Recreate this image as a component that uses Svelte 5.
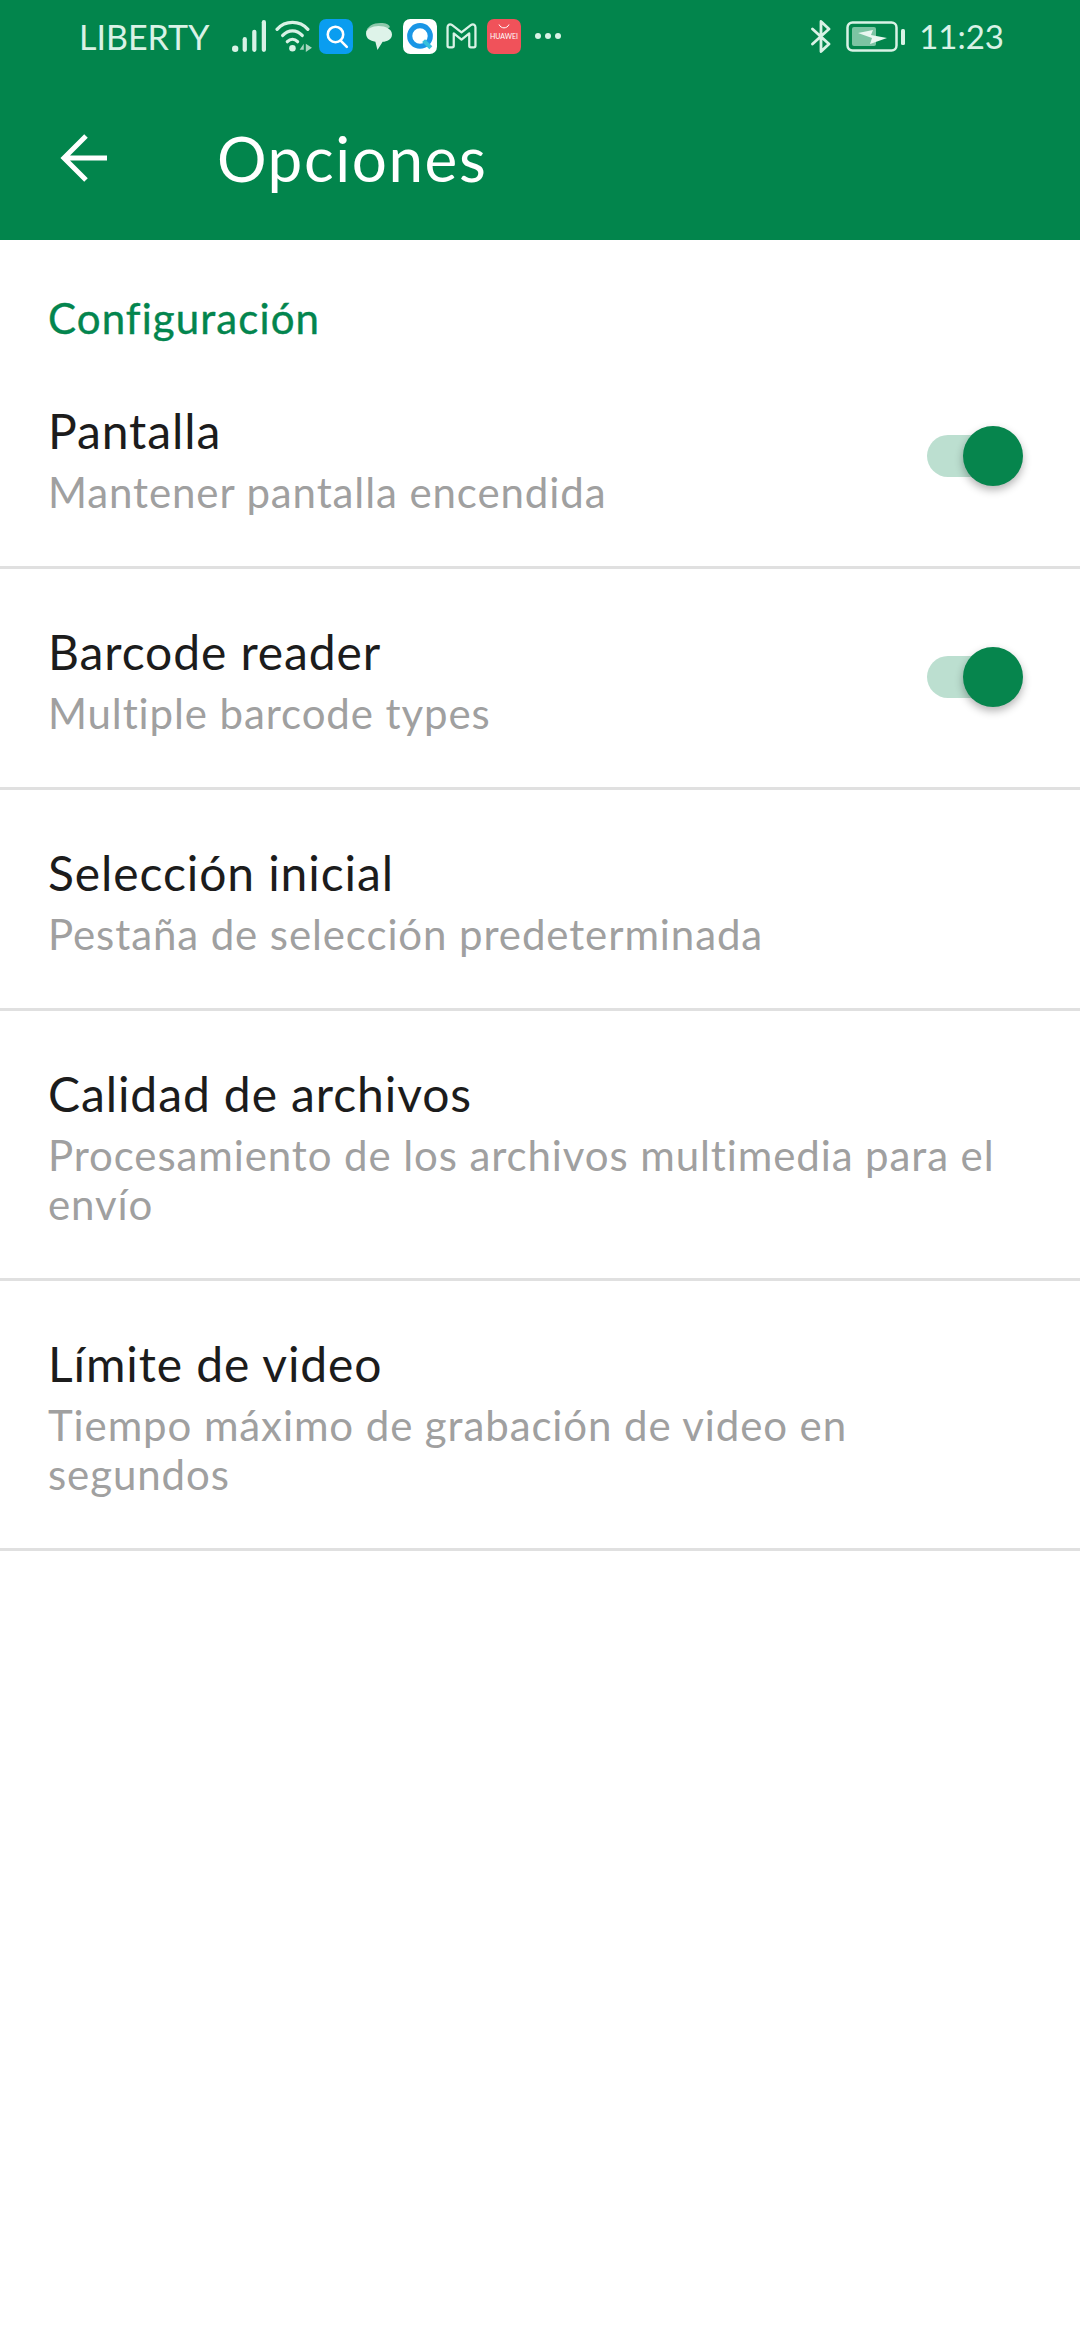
<script>
	const rows = [
		{ title: 'Pantalla', sub: 'Mantener pantalla encendida', on: true },
		{ title: 'Barcode reader', sub: 'Multiple barcode types', on: true },
		{ title: 'Selección inicial', sub: 'Pestaña de selección predeterminada' },
		{ title: 'Calidad de archivos', sub: 'Procesamiento de los archivos multimedia para el envío' },
		{ title: 'Límite de video', sub: 'Tiempo máximo de grabación de video en segundos' }
	];
</script>

<div class="page">
	<header>
		<div class="status">
			<span class="carrier">LIBERTY</span>
			<svg class="signal" viewBox="0 0 32 30" width="34" height="32">
				<g fill="#d9f2e6">
					<circle cx="3" cy="27" r="3" />
					<rect x="10" y="16" width="4" height="14" rx="2" />
					<rect x="19" y="9" width="4" height="21" rx="2" />
					<rect x="28" y="0" width="4" height="30" rx="2" />
				</g>
			</svg>
			<svg class="wifi" viewBox="0 0 37 32" width="38" height="33">
				<g fill="none" stroke="#d9f2e6" stroke-width="3.2" stroke-linecap="round">
					<path d="M2 9 C10 0 24 0 32 9" />
					<path d="M7.5 15 C13 9 21 9 26.5 15" />
					<path d="M12 21 C15 18 19 18 22 21" />
				</g>
				<circle cx="17" cy="27.5" r="3.2" fill="#d9f2e6" />
				<path d="M24 29 L28 23 V29 Z M30 23 L36 27 L30 31 Z" fill="#a9d6c0" />
			</svg>
			<svg class="app" viewBox="0 0 33 34" width="34" height="35">
				<rect width="33" height="34" rx="7" fill="#0a9df0" />
				<circle cx="16" cy="15" r="7.5" fill="none" stroke="#fff" stroke-width="2.5" />
				<path d="M21 21 L27 27" stroke="#fff" stroke-width="2.5" stroke-linecap="round" />
			</svg>
			<svg class="chat" viewBox="0 0 26 26" width="27" height="27">
				<path d="M1 9 C2 3 8 0 15 0 C20 0 23 1 24 4 L8 12 Z" fill="#8fc9ac" />
				<path d="M13 3 C20 3 26 6 26 11 C26 16 21 18 17 18 L12 26 L10 18 C5 17 1 15 1 10 C1 6 7 3 13 3 Z" fill="#def3e9" />
			</svg>
			<svg class="app" viewBox="0 0 33 34" width="34" height="35">
				<rect width="33" height="34" rx="7" fill="#fff" />
				<circle cx="16.5" cy="16.5" r="10" fill="none" stroke="#1a96e6" stroke-width="5" />
				<path d="M20 21 L27 28" stroke="#38c0dc" stroke-width="4" />
			</svg>
			<svg class="gm" viewBox="0 0 30 25" width="31" height="26">
				<path d="M1.5 4 C1.5 1.500 4 0.500 6 2 L15 9 L24 2 C26 0.500 28.500 1.500 28.500 4 V22 C28.500 23 28 23.500 27 23.500 H24 C23 23.500 22.500 23 22.500 22 V10 L15 16 L7.500 10 V22 C7.500 23 7 23.500 6 23.500 H3 C2 23.500 1.500 23 1.500 22 Z" fill="none" stroke="#d9f2e6" stroke-width="2.2" stroke-linejoin="round" />
			</svg>
			<div class="huawei">
				<svg viewBox="0 0 12 5" width="12" height="5"><path d="M1 0.5 C3 5 9 5 11 0.5" fill="none" stroke="#fff" stroke-width="1" /></svg>
				<span>HUAWEI</span>
			</div>
			<span class="more"><i></i><i></i><i></i></span>
			<span class="spacer"></span>
			<svg class="bt" viewBox="0 0 20 33" width="20" height="33">
				<path d="M1.500 9 L18 24 L10 31.500 V1.500 L18 9 L1.500 24" fill="none" stroke="#d9f2e6" stroke-width="2.8" stroke-linejoin="round" stroke-linecap="round" />
			</svg>
			<svg class="battery" viewBox="0 0 59 31" width="59" height="31">
				<rect x="1.500" y="1.500" width="49" height="28" rx="5" fill="none" stroke="#d9f2e6" stroke-width="2.500" />
				<rect x="6" y="6" width="24" height="19" rx="2" fill="#7cc4a3" />
				<path d="M12 12 L27 9 L25 14 L41 17 L24 23 L26 17 Z" fill="#e9f7f0" />
				<rect x="55" y="8" width="4" height="16" rx="1.500" fill="#d9f2e6" />
			</svg>
			<span class="time">11:23</span>
		</div>
		<div class="toolbar">
			<svg class="back" viewBox="0 0 48 48" width="48" height="48">
				<path d="M47 24 H4 M26 2 L4 24 L26 46" fill="none" stroke="#fff" stroke-width="5" />
			</svg>
			<h1>Opciones</h1>
		</div>
	</header>

	<main>
		<h2>Configuración</h2>
		{#each rows as row}
			<div class="row">
				<div class="text">
					<div class="title">{row.title}</div>
					<div class="sub">{row.sub}</div>
				</div>
				{#if row.on}
					<div class="switch"><span class="thumb"></span></div>
				{/if}
			</div>
		{/each}
	</main>
</div>

<style>
	:global(body) {
		margin: 0;
		background: #fff;
	}
	.page {
		width: 1080px;
		height: 2340px;
		font-family: Lato, 'Noto Sans', sans-serif;
		background: #fff;
	}
	header {
		background: #02854c;
		height: 240px;
	}
	.status {
		height: 72px;
		display: flex;
		align-items: center;
		padding: 0 76px 0 79px;
		color: #d9f2e6;
	}
	.carrier {
		font-size: 34px;
		width: 153px;
	}
	.signal {
		margin-right: 9px;
	}
	.wifi {
		margin-right: 6px;
	}
	.chat {
		margin: 0 11px 0 12px;
	}
	.gm {
		margin: 0 10px 0 9px;
	}
	.huawei {
		width: 34px;
		height: 35px;
		border-radius: 7px;
		background: #f0525a;
		display: flex;
		flex-direction: column;
		align-items: center;
		color: #fff;
		font-size: 7px;
		line-height: 8px;
		padding-top: 5px;
		box-sizing: border-box;
		overflow: hidden;
	}
	.huawei svg {
		margin-bottom: 3px;
	}
	.more {
		display: flex;
		gap: 4px;
		margin-left: 14px;
	}
	.more i {
		width: 6px;
		height: 6px;
		border-radius: 50%;
		background: #d9f2e6;
	}
	.spacer {
		flex: 1;
	}
	.battery {
		margin: 0 14px 0 15px;
	}
	.time {
		font-size: 33px;
	}
	.toolbar {
		height: 168px;
		display: flex;
		align-items: center;
		box-sizing: border-box;
		padding: 3px 0 0 60px;
	}
	.back {
		margin-right: 109px;
	}
	h1 {
		margin: 0;
		color: #fff;
		font-size: 62px;
		font-weight: 400;
		letter-spacing: 1.6px;
	}
	h2 {
		margin: 0;
		box-sizing: border-box;
		padding: 53px 48px 0;
		height: 108px;
		line-height: 50px;
		color: #03854e;
		font-size: 42px;
		font-weight: 400;
		letter-spacing: 1.1px;
		-webkit-text-stroke: 0.4px #03854e;
	}
	.row {
		display: flex;
		align-items: center;
		padding: 53px 57px 49px 48px;
		border-bottom: 3px solid #e0e0e0;
	}
	.text {
		flex: 1;
	}
	.title {
		font-size: 48px;
		line-height: 60px;
		letter-spacing: 0.9px;
		color: #1c1c1c;
	}
	.sub {
		font-size: 42px;
		line-height: 49px;
		letter-spacing: 0.9px;
		color: #a0a0a0;
		margin-top: 7px;
	}
	.switch {
		width: 78px;
		height: 42px;
		border-radius: 21px;
		background: #bcdfd0;
		position: relative;
		margin: 0 18px 6px 24px;
	}
	.thumb {
		position: absolute;
		top: -9px;
		right: -18px;
		width: 60px;
		height: 60px;
		border-radius: 50%;
		background: #06854d;
		box-shadow: 0 4px 8px rgba(0, 0, 0, 0.3);
	}
</style>
